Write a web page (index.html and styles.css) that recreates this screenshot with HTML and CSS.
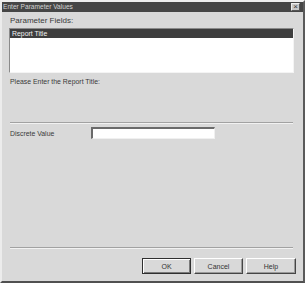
FILE: index.html
```html
<!DOCTYPE html>
<html lang="en">
<head>
    <meta charset="UTF-8">
    <title>Enter Parameter Values</title>
    <link rel="stylesheet" href="styles.css">
</head>
<body>
    <div class="dialog">
        <div class="titlebar">
            <span class="title">Enter Parameter Values</span>
            <span class="close">&times;</span>
        </div>
        <div class="content">
            <div class="label">Parameter Fields:</div>
            <div class="listbox">
                <div class="item selected">Report Title</div>
            </div>
            <div class="label small prompt">Please Enter the Report Title:</div>
            <div class="separator top-sep"></div>
            <div class="value-row">
                <div class="label small value-label">Discrete Value</div>
                <div class="textbox"></div>
            </div>
            <div class="spacer"></div>
            <div class="separator"></div>
            <div class="buttons">
                <button class="btn default">OK</button>
                <button class="btn">Cancel</button>
                <button class="btn help">Help</button>
            </div>
        </div>
    </div>
</body>
</html>
```

FILE: styles.css
```css
body {
    margin: 0;
    padding: 0;
    background: #d9d9d9;
    font-family: "Liberation Sans", Arial, sans-serif;
}

.dialog {
    width: 305px;
    height: 283px;
    box-sizing: border-box;
    display: flex;
    flex-direction: column;
    background: #d9d9d9;
    border-top: 2px solid #efefef;
    border-left: 2px solid #ececec;
    border-right: 2px solid #5a5a5a;
    border-bottom: 2px solid #505050;
}

.titlebar {
    height: 10px;
    background: #464646;
    display: flex;
    align-items: center;
    justify-content: space-between;
    padding: 0 3px 0 1px;
}

.title {
    color: #d4d4d4;
    font-size: 6.6px;
    line-height: 10px;
}

.close {
    width: 9px;
    height: 8px;
    box-sizing: border-box;
    background: #c8c8c8;
    border: 1px solid #eeeeee;
    border-right-color: #555;
    border-bottom-color: #555;
    color: #333;
    font-size: 8px;
    line-height: 6px;
    text-align: center;
}

.content {
    flex: 1;
    display: flex;
    flex-direction: column;
    padding: 4px 7px 7px 7px;
}

.label {
    font-size: 8px;
    line-height: 9px;
    color: #3a3a3a;
    padding-left: 1px;
}

.small {
    font-size: 6.9px;
}

.listbox {
    width: 285px;
    height: 45px;
    box-sizing: border-box;
    margin-top: 3px;
    background: #ffffff;
    border: 1px solid #f4f4f4;
    border-top-color: #8a8a8a;
    border-left-color: #8a8a8a;
}

.item {
    height: 9px;
    font-size: 6.9px;
    line-height: 9px;
    padding-left: 2px;
}

.selected {
    background: #3e3e3e;
    color: #f2f2f2;
}

.prompt {
    margin-top: 4px;
}

.separator {
    width: 283px;
    margin-left: 1px;
    border-top: 1px solid #a2a2a2;
    border-bottom: 1px solid #f2f2f2;
}

.top-sep {
    margin-top: 36px;
}

.value-row {
    display: flex;
    align-items: center;
    margin-top: 3px;
}

.value-label {
    width: 81px;
}

.textbox {
    width: 124px;
    height: 12px;
    box-sizing: border-box;
    background: #ffffff;
    border: 1px solid #f0f0f0;
    border-top: 2px solid #6a6a6a;
    border-left: 2px solid #6a6a6a;
}

.spacer {
    flex: 1;
}

.buttons {
    display: flex;
    justify-content: flex-end;
    gap: 3px;
    margin-top: 9px;
}

.btn {
    width: 49px;
    height: 16px;
    box-sizing: border-box;
    padding: 0;
    background: #d9d9d9;
    border: 1px solid #ffffff;
    border-right-color: #454545;
    border-bottom-color: #454545;
    box-shadow: inset -1px -1px 0 #9a9a9a;
    font-family: "Liberation Sans", Arial, sans-serif;
    font-size: 7px;
    color: #333333;
}

.default {
    border: 1px solid #303030;
    box-shadow: inset 1px 1px 0 #ffffff, inset -1px -1px 0 #7a7a7a;
}

.help {
    width: 50px;
}
```
